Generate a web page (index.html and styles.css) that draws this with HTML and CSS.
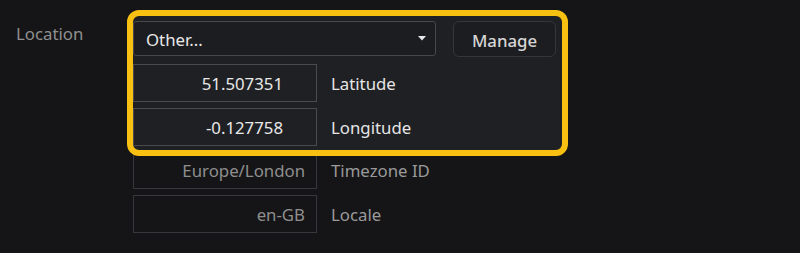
FILE: index.html
```html
<!DOCTYPE html>
<html>
<head>
<meta charset="utf-8">
<link rel="stylesheet" href="styles.css">
</head>
<body>
<div class="form">
  <div class="label">Location</div>
  <div class="fields">
    <div class="highlight">
      <div class="loc-row">
        <div class="select">
          <span class="select-text">Other...</span>
          <svg class="arrow" width="8" height="5" viewBox="0 0 8 5"><path d="M0 0 H8 L4 4.5 Z" fill="#e8e8e8"/></svg>
        </div>
        <button class="btn">Manage</button>
      </div>
      <div class="field-row">
        <div class="input input-num">51.507351</div>
        <div class="field-label">Latitude</div>
      </div>
      <div class="field-row">
        <div class="input input-num">-0.127758</div>
        <div class="field-label">Longitude</div>
      </div>
    </div>
    <div class="field-row dim first-dim">
      <div class="input">Europe/London</div>
      <div class="field-label">Timezone ID</div>
    </div>
    <div class="field-row dim">
      <div class="input">en-GB</div>
      <div class="field-label">Locale</div>
    </div>
  </div>
</div>
</body>
</html>
```
FILE: styles.css
```css
html, body {
  margin: 0;
  padding: 0;
  background: #151517;
  width: 800px;
  height: 253px;
  overflow: hidden;
}
body {
  font-family: "Noto Sans", "Open Sans", sans-serif;
  font-size: 16.8px;
  line-height: 22px;
  color: #e6e6e6;
}
.form {
  display: flex;
  padding-top: 10px;
}
.label {
  width: 117px;
  padding-left: 16px;
  padding-top: 13px;
  color: #8f8f8f;
}
.fields {
  display: flex;
  flex-direction: column;
}
.highlight {
  position: relative;
  z-index: 2;
  margin-left: -6px;
  width: 429px;
  border: 6px solid #f8c010;
  border-radius: 12px;
  background: #1f2023;
  padding: 5px 0 4px 0;
  display: flex;
  flex-direction: column;
  gap: 6px;
}
.loc-row {
  display: flex;
  gap: 17px;
  margin-bottom: 1px;
}
.select {
  box-sizing: border-box;
  width: 303px;
  height: 35px;
  border: 1px solid #47474c;
  border-radius: 3px;
  background: #1c1d20;
  display: flex;
  align-items: center;
  justify-content: space-between;
  padding: 2px 9px 0 12px;
}
.select-text {
  color: #e8e8e8;
}
.arrow {
  display: block;
  margin-top: -2px;
}
.btn {
  box-sizing: border-box;
  width: 103px;
  height: 36px;
  border: 1px solid #35363a;
  border-radius: 6px;
  background: #1c1d20;
  color: #d6d6d6;
  font-family: inherit;
  font-size: 16.8px;
  font-weight: 500;
  padding: 2px 0 0 0;
}
.field-row {
  display: flex;
  align-items: center;
  gap: 14px;
}
.input {
  box-sizing: border-box;
  width: 184px;
  height: 38px;
  border: 1px solid #4a4a4f;
  background: #1f2023;
  display: flex;
  align-items: center;
  justify-content: flex-end;
  padding-right: 11px;
  padding-top: 2px;
  color: #e8e8e8;
}
.input-num {
  padding-right: 33px;
}
.field-label {
  color: #e6e6e6;
  padding-top: 2px;
}
.dim .input {
  border-color: #38383c;
  background: #151517;
  color: #8e8e8e;
}
.dim .field-label {
  color: #9a9a9a;
}
.dim {
  margin-top: 6px;
}
.first-dim {
  position: relative;
  z-index: 1;
  margin-top: -5px;
}
```
